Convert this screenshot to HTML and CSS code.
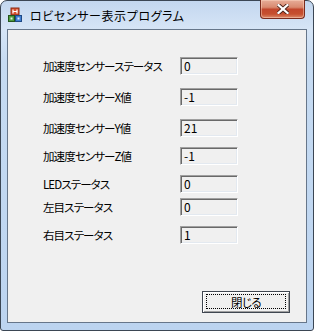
FILE: index.html
```html
<!DOCTYPE html>
<html lang="ja">
<head>
    <meta charset="UTF-8">
    <title>ロビセンサー表示プログラム</title>
    <link rel="stylesheet" href="styles.css">
</head>
<body>

    <div class="window">
        <!-- Title bar -->
        <div class="titlebar">
            <svg class="app-icon" width="16" height="16" viewBox="0 0 16 16">
                <rect x="4" y="1" width="8" height="7" fill="#d9502e" stroke="#8a2a14" stroke-width="1"/>
                <path d="M6 2.5v4M10 2.5v4M6 4.5h4" stroke="#fff" stroke-width="1.2" fill="none"/>
                <rect x="1.5" y="8.5" width="6" height="6" fill="#4c9a3e" stroke="#24551c"/>
                <rect x="8.5" y="8.5" width="6" height="6" fill="#3f7fd1" stroke="#1e4a86"/>
                <path d="M3.5 10.5h2v2h-2z" fill="#e9f5e0"/>
                <path d="M10.5 10.5h2v2h-2z" fill="#e5eefb"/>
            </svg>
            <span class="title">ロビセンサー表示プログラム</span>
            <button class="close-btn" aria-label="閉じる">
                <svg width="12" height="10" viewBox="0 0 12 10">
                    <path d="M1.5 1 L10.5 9 M10.5 1 L1.5 9" stroke="#4a2018" stroke-width="4" stroke-linecap="square"/>
                    <path d="M1.5 1 L10.5 9 M10.5 1 L1.5 9" stroke="#fff" stroke-width="2.2" stroke-linecap="square"/>
                </svg>
            </button>
        </div>

        <!-- Client area -->
        <div class="client">
            <div class="fields">
                <div class="row">
                    <span class="label">加速度センサーステータス</span>
                    <div class="value">0</div>
                </div>
                <div class="row row-wide">
                    <span class="label">加速度センサーX値</span>
                    <div class="value">-1</div>
                </div>
                <div class="row row-wide">
                    <span class="label">加速度センサーY値</span>
                    <div class="value">21</div>
                </div>
                <div class="row row-mid">
                    <span class="label">加速度センサーZ値</span>
                    <div class="value">-1</div>
                </div>
                <div class="row row-mid">
                    <span class="label">LEDステータス</span>
                    <div class="value">0</div>
                </div>
                <div class="row row-tight">
                    <span class="label">左目ステータス</span>
                    <div class="value">0</div>
                </div>
                <div class="row row-mid">
                    <span class="label">右目ステータス</span>
                    <div class="value">1</div>
                </div>
            </div>

            <div class="footer">
                <button class="btn"><span class="focus">閉じる</span></button>
            </div>
        </div>
    </div>

</body>
</html>
```

FILE: styles.css
```css
body {
    margin: 0;
    font-family: "Noto Sans CJK JP", sans-serif;
    font-size: 12px;
    color: #000;
    background: #fff;
}

.window {
    position: relative;
    width: 314px;
    height: 331px;
    box-sizing: border-box;
    border: 1px solid #3b4654;
    border-radius: 7px 7px 3px 3px;
    padding: 0 6px 7px 6px;
    background: linear-gradient(#c3d7ef, #d6e5f6 28px, #c6dbf2 60px, #bcd4f0);
    display: flex;
    flex-direction: column;
}

/* title bar */
.titlebar {
    height: 28px;
    display: flex;
    align-items: center;
}

.app-icon {
    display: block;
    flex: none;
}

.title {
    margin-left: 7px;
    font-size: 12px;
    font-feature-settings: "palt";
    letter-spacing: 0.6px;
    color: #000;
}

.close-btn {
    position: absolute;
    top: -1px;
    right: 8px;
    width: 45px;
    height: 19px;
    padding: 0;
    border: 1px solid #7a2b1d;
    border-top: none;
    border-radius: 0 0 4px 4px;
    background: linear-gradient(#e7ad99 0%, #d98a70 40%, #c2472d 52%, #c6502f 78%, #dc8a6b 100%);
    box-shadow: inset 0 0 0 1px rgba(255, 220, 200, 0.45);
    display: flex;
    align-items: center;
    justify-content: center;
}

.close-btn svg {
    display: block;
}

/* client area */
.client {
    flex: 1;
    border: 1px solid #66768a;
    background: #f0f0f0;
    display: flex;
    flex-direction: column;
}

.fields {
    padding: 27px 0 0 35px;
}

.row {
    display: flex;
    align-items: center;
    height: 18px;
}

.row-wide {
    margin-top: 13px;
}

.row-mid {
    margin-top: 10px;
}

.row-tight {
    margin-top: 5px;
}

.label {
    width: 137px;
    font-size: 11.5px;
    letter-spacing: -0.9px;
    font-feature-settings: "palt";
    white-space: nowrap;
}

.value {
    width: 58px;
    height: 18px;
    box-sizing: border-box;
    border: 1px solid;
    border-color: #a0a0a0 #fff #fff #a0a0a0;
    box-shadow: inset 1px 1px #696969, inset -1px -1px #e3e9f0;
    background: #f0f0f0;
    padding-left: 3px;
    line-height: 16px;
}

.footer {
    margin-top: auto;
    display: flex;
    justify-content: flex-end;
    padding: 0 16px 9px 0;
}

.btn {
    width: 88px;
    height: 22px;
    box-sizing: border-box;
    padding: 2px 3px 3px 3px;
    border: 1px solid #3f4650;
    background: #f0f0f0;
    box-shadow: inset 1px 1px #fff, inset -1px -1px #a0a0a0;
    font-family: inherit;
    font-size: 11.5px;
    letter-spacing: -0.6px;
    color: #000;
}

.focus {
    display: flex;
    align-items: center;
    justify-content: center;
    height: 100%;
    box-sizing: border-box;
    border: 1px dotted #000;
    font-feature-settings: "palt";
}
```
